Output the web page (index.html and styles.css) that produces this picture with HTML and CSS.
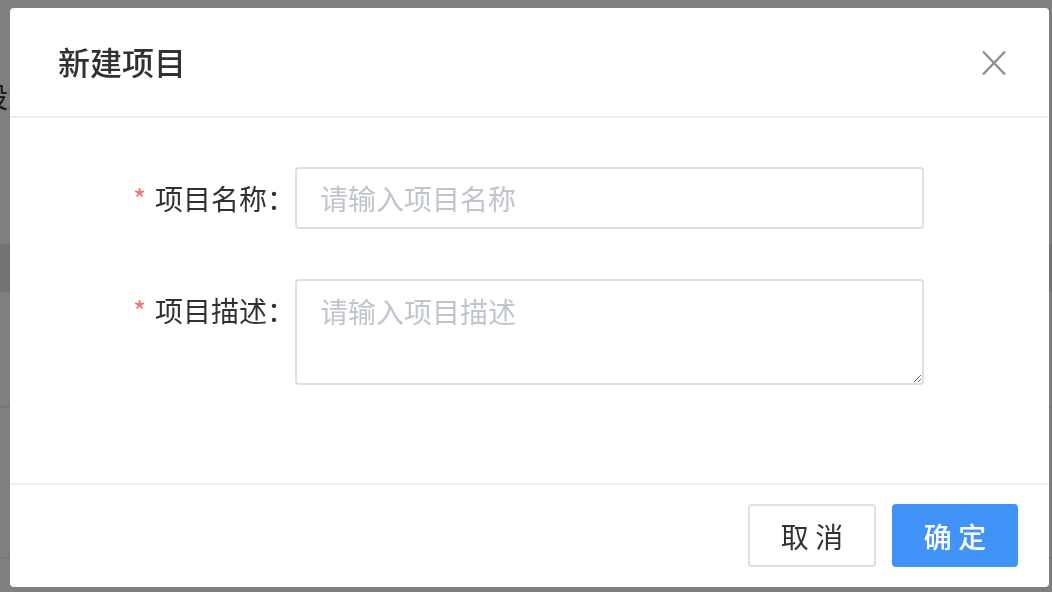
FILE: index.html
```html
<!DOCTYPE html>
<html lang="zh-CN">

<head>
  <meta charset="UTF-8" />
  <title>新建项目</title>
  <link rel="stylesheet" href="styles.css">
</head>

<body>
  <div class="page">
    <div class="page-title">设置</div>
    <div class="table">
      <div class="table-head">项目</div>
      <div class="table-row row-first">一</div>
      <div class="table-row">二</div>
    </div>
  </div>

  <div class="mask">
    <div class="dialog">
      <div class="dialog-header">
        <span class="dialog-title">新建项目</span>
        <button class="dialog-close" aria-label="关闭">
          <svg width="26" height="26" viewBox="0 0 26 26">
            <path d="M2 1.5 L24 24.5 M24 1.5 L2 24.5" stroke="#8c8f96" stroke-width="2.4" fill="none" />
          </svg>
        </button>
      </div>

      <div class="dialog-body">
        <div class="form-item">
          <label class="form-label"><span class="req">*</span>项目名称：</label>
          <input class="form-input" type="text" placeholder="请输入项目名称">
        </div>
        <div class="form-item">
          <label class="form-label"><span class="req">*</span>项目描述：</label>
          <textarea class="form-textarea" placeholder="请输入项目描述"></textarea>
        </div>
      </div>

      <div class="dialog-footer">
        <button class="btn">取 消</button>
        <button class="btn btn-primary">确 定</button>
      </div>
    </div>
  </div>
</body>

</html>
```

FILE: styles.css
```css
* {
  box-sizing: border-box;
}

body {
  margin: 0;
  font-family: "Noto Sans CJK SC", "Noto Sans", sans-serif;
  background: #fff;
  color: #303133;
  width: 1052px;
  height: 592px;
  overflow: hidden;
}

.page {
  padding-top: 80px;
}

.page-title {
  font-size: 28px;
  line-height: 32px;
  text-indent: -20px;
  color: #303133;
}

.table {
  margin-top: 132px;
}

.table-head {
  height: 48px;
  background: #e6e6e6;
  color: #e6e6e6;
  font-size: 14px;
}

.table-row {
  height: 151px;
  border-bottom: 2px solid #ebeef5;
  color: #fff;
  font-size: 14px;
}

.row-first {
  height: 116px;
}

.mask {
  position: fixed;
  inset: 0;
  background: rgba(0, 0, 0, 0.5);
  padding: 8px 3px 5px 10px;
  display: flex;
}

.dialog {
  flex: 1;
  background: #fff;
  border-radius: 4px;
  display: flex;
  flex-direction: column;
  overflow: hidden;
}

.dialog-header {
  height: 110px;
  border-bottom: 2px solid #ebeef5;
  display: flex;
  align-items: center;
  justify-content: space-between;
  padding: 0 42px 0 48px;
}

.dialog-title {
  font-size: 32px;
  line-height: 40px;
  font-weight: 500;
  color: #303133;
  margin-top: -2px;
}

.dialog-close {
  border: none;
  background: none;
  padding: 0;
  width: 26px;
  height: 26px;
  margin-top: 2px;
  cursor: pointer;
}

.dialog-close svg {
  display: block;
}

.dialog-body {
  flex: 1;
  padding: 49px 125px 0 85px;
  display: flex;
  flex-direction: column;
  gap: 50px;
}

.form-item {
  display: flex;
  align-items: flex-start;
}

.form-label {
  width: 200px;
  flex-shrink: 0;
  text-align: right;
  font-size: 28px;
  line-height: 62px;
  color: #303133;
}

.req {
  color: #f56c6c;
  margin-right: 9px;
}

.form-input,
.form-textarea {
  flex: 1;
  border: 2px solid #dcdfe6;
  border-radius: 4px;
  font-family: inherit;
  font-size: 28px;
  color: #606266;
  outline: none;
  background: #fff;
}

.form-input {
  height: 62px;
  padding: 0 23px;
}

.form-textarea {
  height: 106px;
  padding: 11px 23px;
  line-height: 38px;
  resize: vertical;
}

.form-input::placeholder,
.form-textarea::placeholder {
  color: #c0c4cc;
}

.dialog-footer {
  height: 104px;
  border-top: 2px solid #ebeef5;
  display: flex;
  justify-content: flex-end;
  align-items: flex-start;
  padding: 19px 31px 0 0;
  gap: 16px;
}

.btn {
  width: 128px;
  height: 63px;
  border: 2px solid #dcdfe6;
  border-radius: 4px;
  background: #fff;
  color: #303133;
  font-family: inherit;
  font-size: 28px;
  cursor: pointer;
}

.btn-primary {
  width: 126px;
  background: #4193f7;
  border-color: #4193f7;
  color: #fff;
  font-weight: 500;
}
```
